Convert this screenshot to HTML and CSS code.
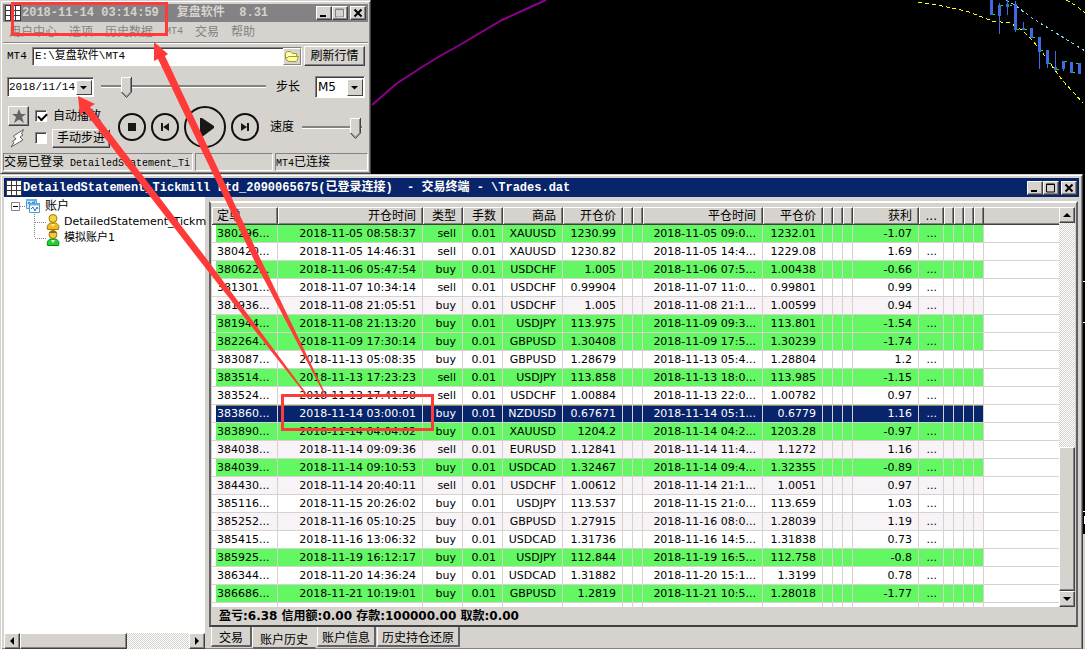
FILE: index.html
```html
<!DOCTYPE html>
<html lang="zh-CN">
<head>
<meta charset="utf-8">
<title>复盘软件</title>
<link rel="stylesheet" href="styles.css">
</head>
<body>
<main class="desktop">
  <svg class="chart" width="1085" height="649" shape-rendering="crispEdges" aria-hidden="true">
    <polyline points="372,105 396,84 422,67 440,56 458,46 480,33 502,20 524,10 546,0" fill="none" stroke="#8c008c" stroke-width="2" shape-rendering="auto"/>
    <g fill="none" stroke="#ff0" stroke-width="1" stroke-dasharray="4 3">
      <polyline points="918,2 942,6 966,11 982,17 992,21 1010,23 1022,30 1032,40 1042,52 1052,66 1062,80 1073,92 1083,103"/>
      <polyline points="1066,0 1075,5 1085,13"/>
    </g>
    <polyline points="1006,0 1016,6 1032,18 1048,28 1064,38 1085,51" fill="none" stroke="#84d7f7" stroke-dasharray="3 3"/>
    <g fill="#4169e1">
      <path d="M990 0h3v15h-3zM998 5h3v11h-3zM999 3h1v31h-1zM1006 4h3v3h-3zM1007 0h1v15h-1zM1014 4h3v26h-3zM1015 1h1v31h-1zM1022 28h3v2h-3zM1023 22h1v8h-1zM1030 28h3v10h-3zM1038 37h3v15h-3zM1039 37h1v32h-1zM1046 50h3v14h-3zM1047 50h1v18h-1zM1054 67h3v3h-3zM1055 51h1v20h-1zM1062 61h3v8h-3zM1063 61h1v10h-1zM1070 62h3v11h-3zM1078 63h3v11h-3z"/>
    </g>
    <path d="M993 14h2v1h-2zM1001 5h2v1h-2zM1010 5h2v1h-2zM1017 29h2v1h-2zM1025 29h2v1h-2zM1033 37h2v1h-2zM1041 50h2v1h-2zM1049 63h2v1h-2zM1057 69h2v1h-2zM1065 61h2v1h-2zM1073 72h2v1h-2zM1076 63h2v1h-2z" fill="#0f0"/>
    <path d="M1083 534h2v115h-2z" fill="#d6d3ce"/>
    <path d="M1083 281h2v1h-2zM1083 322h2v1h-2zM1083 511h2v1h-2zM1084 516h1v8h-1z" fill="#fff"/>
  </svg>

  <section class="window replay">
    <header class="titlebar titlebar-idle">
      <svg class="app-icon" width="16" height="16" shape-rendering="crispEdges"><path fill="#3a3a3a" d="M0 0h16v16H0z"/><path fill="#fff" d="M1 1h4v4H1zM6 1h4v4H6zM11 1h4v4h-4zM1 6h4v4H1zM6 6h4v4H6zM11 6h4v4h-4zM1 11h4v4H1zM6 11h4v4H6zM11 11h4v4h-4z"/></svg>
      <h1 class="title"><time>2018-11-14 03:14:59</time><span>复盘软件&nbsp; 8.31</span></h1>
      <div class="win-buttons">
        <button class="win-btn" aria-label="最小化"><svg width="12" height="10"><path d="M2 7h6v2H2z"/></svg></button>
        <button class="win-btn" aria-label="最大化"><svg width="12" height="10"><path d="M1.500 1h8v8h-8zM1 1.500h9" fill="none" stroke="#848284"/><path d="M3 10h8V2" fill="none" stroke="#fff"/></svg></button>
        <button class="win-btn win-close" aria-label="关闭"><svg width="12" height="10"><path d="M2.500 1.500l7 7M9.500 1.500l-7 7" stroke="#000" stroke-width="2"/></svg></button>
      </div>
    </header>
    <nav class="menu">
      <button disabled>用户中心</button><button disabled>选项</button><button disabled>历史数据</button><button disabled class="mono-small">MT4</button><button disabled>交易</button><button disabled>帮助</button>
    </nav>
    <div class="row path-row">
      <label class="mono" for="path">MT4</label>
      <div class="path-box">
        <input id="path" type="text" value="E:\复盘软件\MT4">
        <button class="browse" aria-label="浏览"><svg width="16" height="14"><path d="M1.500 10V4.500l2-2h3l2 2h4v3" fill="#ffffa5" stroke="#9c9a31"/><path d="M4.500 7.500h10l-1.500 4-1 1h-7l-2-1.500-2-2.500h3z" fill="#ffff9c" stroke="#9c9a31"/><path d="M3 5.500h3l2 1.500" fill="none" stroke="#fff"/></svg></button>
      </div>
      <button class="raised refresh">刷新行情</button>
    </div>
    <div class="row date-row">
      <span class="combo date-combo"><select aria-label="日期"><option>2018/11/14</option></select><svg class="drop" width="16" height="15"><path d="M3 5h7L6.500 8.500z"/></svg></span>
      <input class="slider progress" type="range" min="0" max="100" value="13" aria-label="进度">
      <label for="step">步长</label>
      <span class="combo step-combo"><select id="step"><option>M5</option></select><svg class="drop" width="16" height="15"><path d="M3 6h7L6.500 9.500z"/></svg></span>
    </div>
    <div class="row play-row">
      <div class="options">
        <button class="raised star" aria-label="收藏"><svg width="16" height="14"><path d="M8 0l2 5h5l-4 3 2 6-5-3.500L3 14l2-6-4-3h5z" fill="#636563"/></svg></button>
        <input id="auto" type="checkbox" checked><label for="auto">自动播放</label>
        <svg class="bolt" width="20" height="20"><path d="M15.500 1.500L5.500 8l2.500 3-3.500 2.500 1.500 1L3 19l12-7-3-3 3-2-1.500-1z" fill="#fff" stroke="#636163"/></svg>
        <input id="manual" type="checkbox" aria-label="手动"><button class="raised manual">手动步进</button>
      </div>
      <div class="transport">
        <button class="round" aria-label="停止"><svg width="28" height="28"><circle cx="14" cy="14" r="13"/><path d="M10 10h8v8h-8z"/></svg></button>
        <button class="round" aria-label="上一步"><svg width="28" height="28"><circle cx="14" cy="14" r="13"/><path d="M10 10h2v8h-2zM18 10v8l-6-4z"/></svg></button>
        <button class="round" aria-label="播放"><svg width="42" height="42"><circle cx="21" cy="21" r="20"/><path d="M16 12h2l12 8v2l-12 9h-2z"/></svg></button>
        <button class="round" aria-label="下一步"><svg width="28" height="28"><circle cx="14" cy="14" r="13"/><path d="M10 10l6 4-6 4zM16 10h2v8h-2z"/></svg></button>
      </div>
      <label for="speed">速度</label>
      <input class="slider speed" id="speed" type="range" min="0" max="100" value="97">
    </div>
    <footer class="status">
      <span class="pane">交易已登录<span class="mono-small"> DetailedStatement_Ti</span></span>
      <span class="pane"></span>
      <span class="pane"><span class="mono-small">MT4</span>已连接</span>
    </footer>
  </section>

  <section class="window terminal">
    <header class="titlebar">
      <svg class="app-icon" width="16" height="16" shape-rendering="crispEdges"><path fill="#3a3a3a" d="M0 0h16v16H0z"/><path fill="#fff" d="M1 1h4v4H1zM6 1h4v4H6zM11 1h4v4h-4zM1 6h4v4H1zM6 6h4v4H6zM11 6h4v4h-4zM1 11h4v4H1zM6 11h4v4H6zM11 11h4v4h-4z"/></svg>
      <h2 class="title">DetailedStatement_Tickmill Ltd_2090065675(已登录连接)&nbsp; - 交易终端 - \Trades.dat</h2>
      <div class="win-buttons">
        <button class="win-btn" aria-label="最小化"><svg width="12" height="10"><path d="M2 7h6v2H2z"/></svg></button>
        <button class="win-btn" aria-label="最大化"><svg width="12" height="10"><path d="M1.500 1h8v8h-8zM1 1.500h9" fill="none" stroke="#000"/></svg></button>
        <button class="win-btn win-close" aria-label="关闭"><svg width="12" height="10"><path d="M2.500 1.500l7 7M9.500 1.500l-7 7" stroke="#000" stroke-width="2"/></svg></button>
      </div>
    </header>
    <div class="terminal-body">
      <aside class="accounts">
        <ul class="tree">
          <li class="tree-root">
            <svg width="34" height="16"><path d="M4.500 4.500h8v8h-8z" fill="#fff" stroke="#848284"/><path d="M6 8.500h5" stroke="#000"/><path d="M13 8.500h6" stroke="#848284" stroke-dasharray="1 1"/><path d="M19.500 1.500h10v9h-10z" fill="#cfe8fb" stroke="#4a9ad6"/><path d="M22.500 5.500h10v9h-10z" fill="#fff" stroke="#4a9ad6"/><path d="M19 2h11M23 6.500h9" stroke="#6bb2e7" stroke-width="2"/><path d="M24 11l2-2 2 4 2-4 1 2M21 6l1-2 1 1M25 4l2 1 1-2" fill="none" stroke="#2971b5"/></svg><span>账户</span>
          </li>
          <li class="tree-leaf">
            <svg width="32" height="16"><path d="M6.500 0v16M7 8.500h11" stroke="#848284" stroke-dasharray="1 1"/><path d="M19.500 15.500c-1-4 1-6 3-6.500h5c3 1 4 3 3 6.500z" fill="#efb921" stroke="#a57900"/><circle cx="25" cy="4.500" r="4" fill="#f7cf42" stroke="#a57900"/><path d="M23 10l2 3 2-3z" fill="#fff3b0"/></svg><span>DetailedStatement_Tickm</span>
          </li>
          <li class="tree-leaf">
            <svg width="32" height="16"><path d="M6.500 0v8M7 8.500h11" fill="none" stroke="#848284" stroke-dasharray="1 1"/><path d="M19.500 15.500c-1-4 1-6 3-6.500h5c3 1 4 3 3 6.500z" fill="#21cf31" stroke="#008a10"/><circle cx="25" cy="4.500" r="4" fill="#f7c742" stroke="#9c7108"/><path d="M21 3q4-5 8 0z" fill="#8c6518"/><path d="M23 10l2 3 2-3z" fill="#fff"/></svg><span>模拟账户1</span>
          </li>
        </ul>
        <div class="scroll scroll-x">
          <button class="raised" aria-label="向左"><svg width="8" height="8"><path d="M6 0v8L2 4z"/></svg></button>
          <div class="raised thumb"></div>
          <button class="raised end" aria-label="向右"><svg width="8" height="8"><path d="M2 0v8l4-4z"/></svg></button>
        </div>
      </aside>
      <div class="history">
        <div class="panel">
          <div class="grid-area">
            <div class="table-clip">
              <table class="trades">
                <colgroup><col class="c66"><col class="c145"><col class="c40"><col class="c40"><col class="c60"><col class="c60"><col class="c10"><col class="c10"><col class="c120"><col class="c60"><col class="c10"><col class="c10"><col class="c10"><col class="c66"><col class="c25"><col class="c10"><col class="c10"><col class="c10"><col class="c10"><col></colgroup>
                <thead><tr><th>定单</th><th>开仓时间</th><th>类型</th><th>手数</th><th>商品</th><th>开仓价</th><th></th><th></th><th>平仓时间</th><th>平仓价</th><th></th><th></th><th></th><th>获利</th><th>...</th><th></th><th></th><th></th><th></th><th></th></tr></thead>
                <tbody id="trades"></tbody>
              </table>
            </div>
            <div class="scroll scroll-y">
              <button class="raised" aria-label="向上"><svg width="8" height="8"><path d="M0 6h8L4 2z"/></svg></button>
              <div class="track"></div>
              <div class="raised thumb"></div>
              <button class="raised" aria-label="向下"><svg width="8" height="8"><path d="M0 2h8L4 6z"/></svg></button>
            </div>
          </div>
          <p class="summary">盈亏:6.38 信用额:0.00 存款:100000.00 取款:0.00</p>
        </div>
        <nav class="tabs">
          <button class="tab tab-wide">交易</button><button class="tab tab-wide active">账户历史</button><button class="tab">账户信息</button><button class="tab">历史持仓还原</button>
        </nav>
      </div>
    </div>
  </section>

  <svg class="notes" width="1085" height="649" aria-hidden="true">
    <g fill="none" stroke="#ff3b39" stroke-width="3"><path d="M12.500 3.500h154v31h-154z"/><path d="M282.500 395.500h150v34h-150z"/></g>
    <g fill="#ff3b39">
      <path d="M78 96l17 8-5 3L206 258l100 135-1 1L200 261 84 111l-4 5z"/>
      <path d="M154 42l14 12-3 2 95 202 65 135-1 1-70-134L158 59l-4 2z"/>
    </g>
  </svg>
</main>
<script src="trades.js"></script>
</body>
</html>
```

FILE: styles.css
```css
* { box-sizing: border-box; }
body {
  margin: 0;
  background: #000;
  color: #000;
  font: 12px/16px "DejaVu Sans", "Noto Sans CJK SC", sans-serif;
}
h1, h2, p, ul { margin: 0; padding: 0; }
button, input, select { font: inherit; color: inherit; margin: 0; padding: 0; border-radius: 0; }
button { border: 0; background: none; }
svg { display: block; flex: none; }
.mono, .mono-small { font-family: "Liberation Mono", "Noto Sans CJK SC", monospace; white-space: pre; }
.mono { font-size: 11px; }
.mono-small { font-size: 10px; }

.desktop { position: relative; height: 100vh; overflow: hidden; }
.chart, .notes { position: absolute; left: 0; top: 0; }
.notes { pointer-events: none; z-index: 3; }

.window {
  position: absolute;
  left: 0;
  background: #d6d3ce;
  border: 1px solid #d6d3ce;
  border-right-color: #424142;
  border-bottom-color: #424142;
  box-shadow: inset 1px 1px #fff, inset -1px -1px #848284;
  padding: 3px 2px 2px 2px;
}
.replay { top: 0; width: 371px; display: flex; flex-direction: column; }
.terminal { top: 174px; right: 2px; bottom: 0; border-bottom: 0; padding: 3px 3px 0; display: flex; flex-direction: column; }

.titlebar {
  display: flex;
  align-items: center;
  flex: none;
  height: 18px;
  padding: 0 2px 0 2px;
  background: #08246b;
  color: #fff;
}
.terminal .titlebar { height: 19px; }
.titlebar-idle { background: #848284; color: #d6d3ce; }
.title {
  flex: 1;
  display: flex;
  gap: 18px;
  padding-left: 1px;
  font: bold 12px/16px "Liberation Mono", "Noto Sans CJK SC", monospace;
  white-space: nowrap;
}
.terminal .title { display: block; }
.win-buttons { display: flex; }
.win-btn, .raised {
  display: flex;
  align-items: center;
  justify-content: center;
  background: #d6d3ce;
  border: 1px solid;
  border-color: #fff #424142 #424142 #fff;
  box-shadow: inset -1px -1px #848284;
}
.win-btn { width: 16px; height: 14px; }
.win-close { margin-left: 2px; }

.menu {
  display: flex;
  gap: 12px;
  flex: none;
  height: 21px;
  padding-left: 6px;
  border-bottom: 1px solid #848284;
  box-shadow: 0 1px #fff;
  color: #848284;
}
.menu button { color: inherit; line-height: 18px; }

.row { display: flex; align-items: center; padding: 0 3px 0 4px; }
.path-row { height: 26px; }
.path-row label { width: 25px; }
.path-box {
  display: flex;
  flex: 1;
  height: 19px;
  background: #fff;
  border: 1px solid;
  border-color: #848284 #fff #fff #848284;
  box-shadow: inset 1px 1px #424142;
}
.path-box input {
  flex: 1;
  min-width: 0;
  border: 0;
  background: none;
  padding-left: 2px;
  font: 11px/16px "Liberation Mono", "Noto Sans CJK SC", monospace;
}
.browse { width: 18px; background: #d6d3ce; border: 1px solid; border-color: #fff #848284 #848284 #fff; }
.refresh { width: 61px; height: 20px; margin-left: 2px; }

.date-row { height: 35px; }
.combo {
  position: relative;
  display: flex;
  height: 20px;
  background: #fff;
  border: 1px solid;
  border-color: #848284 #fff #fff #848284;
  box-shadow: inset 1px 1px #424142;
}
.combo select { width: 100%; appearance: none; border: 0; background: none; padding-left: 2px; }
.drop {
  position: absolute;
  top: 2px;
  right: 1px;
  background: #d6d3ce;
  border: 1px solid;
  border-color: #fff #424142 #424142 #fff;
  pointer-events: none;
  width: 16px;
  height: 15px;
}
.date-combo { width: 87px; }
.date-combo select { padding-left: 1px; font: 11px/16px "Liberation Mono", monospace; }
.step-combo { width: 50px; height: 22px; }
.step-combo .drop { height: 17px; }
.date-row label { margin: 0 15px 0 10px; }

.slider { appearance: none; background: none; height: 22px; }
.slider::-webkit-slider-runnable-track {
  height: 3px;
  background: #848284;
  border-bottom: 1px solid #fff;
}
.slider::-webkit-slider-thumb {
  appearance: none;
  width: 11px;
  height: 21px;
  margin-top: -8px;
  background: url("data:image/svg+xml,%3Csvg xmlns='http://www.w3.org/2000/svg' width='11' height='21'%3E%3Cpath d='M0 0h11v15l-5.500 6L0 15z' fill='%23d6d3ce'/%3E%3Cpath d='M.5 15V.5H10' fill='none' stroke='%23fff'/%3E%3Cpath d='M9.500 1v14L5.500 19 1 15' fill='none' stroke='%23848284'/%3E%3Cpath d='M10.500 0v15l-5 5.500L.5 15' fill='none' stroke='%23424142'/%3E%3C/svg%3E") no-repeat;
}
.progress { flex: 1; min-width: 0; margin-left: 7px; }
.speed { flex: 1; min-width: 0; margin-left: 8px; }

.play-row { height: 46px; padding-right: 6px; }
.options {
  display: grid;
  grid-template-columns: 21px 12px auto;
  grid-template-rows: 20px 20px;
  align-items: center;
  gap: 2px 6px;
  width: 104px;
  padding-left: 1px;
}
.options label { white-space: nowrap; }
.star { width: 21px; height: 20px; }
.manual { width: 58px; height: 19px; margin-left: -1px; }
input[type="checkbox"] {
  appearance: none;
  width: 12px;
  height: 12px;
  background: #fff;
  border: 1px solid;
  border-color: #848284 #fff #fff #848284;
  box-shadow: inset 1px 1px #424142;
}
input[type="checkbox"]:checked::before {
  content: "";
  display: block;
  width: 7px;
  height: 4px;
  margin: 2px 0 0 2px;
  border: solid #000;
  border-width: 0 0 2px 2px;
  transform: rotate(-45deg);
}
.transport { display: flex; align-items: center; gap: 5px; margin: 0 11px 0 7px; }
.round circle { fill: none; stroke: #101010; stroke-width: 2; }
.round path { fill: #181818; }

.status { display: grid; grid-template-columns: 190px 78px 1fr; gap: 2px; flex: none; height: 18px; margin-top: 3px; }
.pane {
  overflow: hidden;
  white-space: nowrap;
  line-height: 16px;
  border: 1px solid;
  border-color: #848284 #fff #fff #848284;
}

.terminal-body { display: flex; flex: 1; min-height: 0; }
.accounts { display: flex; flex-direction: column; width: 201px; flex: none; background: #fff; }
.tree { flex: 1; list-style: none; padding-top: 1px; }
.tree li { display: flex; height: 16px; white-space: nowrap; font-size: 11px; }
.tree-root { gap: 4px; padding-left: 3px; }
.tree .tree-root { font-size: 12px; }
.tree-leaf { gap: 4px; padding-left: 24px; }
.scroll { display: flex; background: repeating-conic-gradient(#d6d3ce 0 25%, #fff 0 50%) 0 0 / 2px 2px; }
.scroll button { width: 16px; height: 16px; flex: none; }
.scroll-x { height: 16px; }
.scroll-x .thumb { width: 107px; }
.scroll-x .end { margin-left: auto; }
.scroll-y { flex-direction: column; width: 16px; flex: none; }
.scroll-y .track { flex: 226; }
.scroll-y .thumb { flex: 144; }

.history { display: flex; flex-direction: column; flex: 1; min-width: 0; padding: 4px 1px 0 4px; }
.panel {
  display: flex;
  flex-direction: column;
  flex: 1;
  min-height: 0;
  padding: 4px 1px 0 1px;
  border: 2px solid;
  border-color: #fff #636163 #424142 #636163;
}
.grid-area { display: flex; flex: 1; min-height: 0; }
.table-clip { flex: 1; min-width: 0; overflow: hidden; background: #fff; }
.trades { width: 100%; table-layout: fixed; border-collapse: separate; border-spacing: 0; font-size: 11px; }
.c10 { width: 10px; }
.c25 { width: 25px; }
.c40 { width: 40px; }
.c60 { width: 60px; }
.c66 { width: 66px; }
.c120 { width: 120px; }
.c145 { width: 145px; }
.trades th, .trades td { height: 18px; padding: 0 6px 0 0; text-align: right; white-space: nowrap; overflow: hidden; line-height: 17px; }
.trades th {
  font-size: 12px;
  font-weight: normal;
  background: #d6d3ce;
  border: solid;
  border-width: 1px 1px 1px 0;
  border-color: #fff #424142 #424142;
  box-shadow: inset 1px 0 #fff, inset -1px -1px #848284;
  line-height: 16px;
}
.trades th:first-child, .trades td:first-child { text-align: left; padding-left: 5px; padding-right: 0; }
.trades th:last-child { border-right: 0; box-shadow: inset 0 -1px #848284; }
.trades td { border: solid #d6d3ce; border-width: 0 1px 1px 0; }
.trades td:last-child { border-right: 0; }
.trades tr:nth-child(odd) td { background: #f7f3f7; }
.trades tr.loss td { background: #63f763; }
.trades tr.selected td {
  background: #08246b;
  color: #fff;
  box-shadow: inset 0 1px #8c8a63;
}
.trades tbody td:last-child, .trades tbody tr.loss td:last-child,
.trades tbody tr.selected td:last-child { background: #fff; box-shadow: none; }
.trades tbody td:first-child { box-shadow: inset 4px 0 #fff; }
.trades tbody tr.selected td:first-child { box-shadow: inset 4px 0 #fff, inset 0 1px #8c8a63; }

.summary { height: 18px; padding-left: 7px; font-weight: bold; line-height: 18px; white-space: nowrap; overflow: hidden; }

.tabs { display: flex; align-items: flex-start; height: 22px; flex: none; padding-left: 2px; }
.tab {
  height: 20px;
  margin-right: 1px;
  padding: 3px 4px 0 4px;
  white-space: nowrap;
  border: solid;
  border-width: 0 2px 2px 1px;
  border-color: #848284 #636163 #636163 #fff;
}
.tab-wide { margin-right: 0; padding: 3px 7px 0 7px; }
.tab.active { height: 22px; padding-top: 5px; border-right-color: #d6d3ce; }
```

FILE: trades.js
```js
const trades = [
  ["380296", "2018-11-05 08:58:37", "sell", "XAUUSD", "1230.99", "2018-11-05 09:0", "1232.01", "-1.07"],
  ["380420", "2018-11-05 14:46:31", "sell", "XAUUSD", "1230.82", "2018-11-05 14:4", "1229.08", "1.69"],
  ["380622", "2018-11-06 05:47:54", "buy", "USDCHF", "1.005", "2018-11-06 07:5", "1.00438", "-0.66"],
  ["381301", "2018-11-07 10:34:14", "sell", "USDCHF", "0.99904", "2018-11-07 11:0", "0.99801", "0.99"],
  ["381936", "2018-11-08 21:05:51", "buy", "USDCHF", "1.005", "2018-11-08 21:1", "1.00599", "0.94"],
  ["381944", "2018-11-08 21:13:20", "buy", "USDJPY", "113.975", "2018-11-09 09:3", "113.801", "-1.54"],
  ["382264", "2018-11-09 17:30:14", "buy", "GBPUSD", "1.30408", "2018-11-09 17:5", "1.30239", "-1.74"],
  ["383087", "2018-11-13 05:08:35", "buy", "GBPUSD", "1.28679", "2018-11-13 05:4", "1.28804", "1.2"],
  ["383514", "2018-11-13 17:23:23", "sell", "USDJPY", "113.858", "2018-11-13 18:0", "113.985", "-1.15"],
  ["383524", "2018-11-13 17:41:58", "sell", "USDCHF", "1.00884", "2018-11-13 22:0", "1.00782", "0.97"],
  ["383860", "2018-11-14 03:00:01", "buy", "NZDUSD", "0.67671", "2018-11-14 05:1", "0.6779", "1.16"],
  ["383890", "2018-11-14 04:04:02", "buy", "XAUUSD", "1204.2", "2018-11-14 04:2", "1203.28", "-0.97"],
  ["384038", "2018-11-14 09:09:36", "sell", "EURUSD", "1.12841", "2018-11-14 11:4", "1.1272", "1.16"],
  ["384039", "2018-11-14 09:10:53", "buy", "USDCAD", "1.32467", "2018-11-14 09:4", "1.32355", "-0.89"],
  ["384430", "2018-11-14 20:40:11", "sell", "USDCHF", "1.00612", "2018-11-14 21:1", "1.0051", "0.97"],
  ["385116", "2018-11-15 20:26:02", "buy", "USDJPY", "113.537", "2018-11-15 21:0", "113.659", "1.03"],
  ["385252", "2018-11-16 05:10:25", "buy", "GBPUSD", "1.27915", "2018-11-16 08:0", "1.28039", "1.19"],
  ["385415", "2018-11-16 13:06:32", "buy", "USDCAD", "1.31736", "2018-11-16 14:5", "1.31838", "0.73"],
  ["385925", "2018-11-19 16:12:17", "buy", "USDJPY", "112.844", "2018-11-19 16:5", "112.758", "-0.8"],
  ["386344", "2018-11-20 14:36:24", "buy", "USDCAD", "1.31882", "2018-11-20 15:1", "1.3199", "0.78"],
  ["386686", "2018-11-21 10:19:01", "buy", "GBPUSD", "1.2819", "2018-11-21 10:5", "1.28018", "-1.77"],
];

const body = document.getElementById("trades");

function addRow(cells) {
  const row = body.insertRow();
  for (const text of cells) row.insertCell().textContent = text;
  return row;
}

for (const [id, opened, type, symbol, open, closed, close, profit] of trades) {
  const row = addRow([id + "...", opened, type, "0.01", symbol, open, "", "",
    closed + "...", close, "", "", "", profit, "...", "", "", "", "", ""]);
  if (profit.startsWith("-")) row.className = "loss";
  if (id === "383860") row.className = "selected";
}

addRow(Array(20).fill("")).className = "blank";
```
